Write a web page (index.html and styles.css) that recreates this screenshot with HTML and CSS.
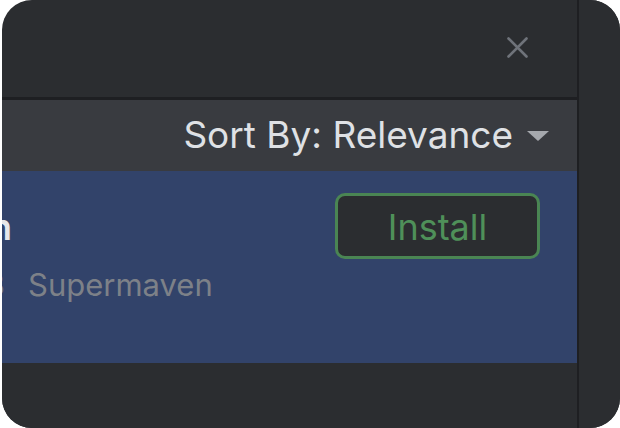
FILE: index.html
```html
<!DOCTYPE html>
<html lang="en">
<head>
<meta charset="utf-8">
<title>Plugins</title>
<link rel="stylesheet" href="styles.css">
</head>
<body>
<div class="window">
  <div class="main">
    <div class="header">
      <button class="close" aria-label="Close">
        <svg width="21" height="21" viewBox="0 0 21 21"><path d="M1.5 1.5 L19.5 19.5 M19.5 1.5 L1.5 19.5" stroke="#6f737a" stroke-width="2.6" stroke-linecap="round" fill="none"/></svg>
      </button>
    </div>
    <div class="sortbar">
      <span class="sort-label">Sort By: Relevance</span>
      <svg class="caret" width="22" height="10" viewBox="0 0 22 10"><path d="M0 0 H22 L11 10 Z" fill="#a5a8ad"/></svg>
    </div>
    <div class="plugin-row selected">
      <div class="info">
        <div class="name">Supermaven</div>
        <div class="meta">
          <span class="stats"><span>↓ 96.4K</span><span>★ 4.3</span></span>
          <span class="vendor">Supermaven</span>
        </div>
      </div>
      <button class="install">Install</button>
    </div>
    <div class="rest"></div>
  </div>
  <div class="vdivider"></div>
  <div class="side"></div>
</div>
</body>
</html>
```
FILE: styles.css
```css
html, body {
  margin: 0;
  padding: 0;
  background: #ffffff;
}

body {
  font-family: "Inter", "Noto Sans", sans-serif;
}

.window {
  display: flex;
  margin-left: 2px;
  width: 618px;
  height: 428px;
  border-radius: 30px;
  overflow: hidden;
  background: #2b2d30;
}

.main {
  flex: 0 0 575px;
  display: flex;
  flex-direction: column;
  overflow: hidden;
}

.vdivider {
  flex: 0 0 2px;
  background: #1e1f22;
}

.side {
  flex: 1;
  background: #2b2d30;
}

.header {
  height: 95px;
  border-bottom: 3px solid #1e1f22;
  display: flex;
  align-items: center;
  justify-content: flex-end;
  padding-right: 49px;
  padding-bottom: 2px;
  box-sizing: content-box;
  flex: 0 0 auto;
}

.close {
  width: 21px;
  height: 21px;
  padding: 0;
  border: 0;
  background: none;
  display: block;
}

.close svg {
  display: block;
}

.sortbar {
  flex: 0 0 71px;
  background: #393b40;
  display: flex;
  align-items: center;
  justify-content: flex-end;
  gap: 14px;
  padding-right: 28px;
  padding-bottom: 2px;
  box-sizing: border-box;
}

.sort-label {
  font-size: 37px;
  line-height: 1;
  color: #dfe1e5;
  white-space: nowrap;
}

.caret {
  display: block;
  margin-top: 3px;
}

.plugin-row {
  flex: 0 0 192px;
  display: flex;
  align-items: flex-start;
  justify-content: space-between;
  padding: 22px 37px 0 0;
  box-sizing: border-box;
}

.plugin-row.selected {
  background: #32436a;
}

.info {
  margin-left: -210px;
  margin-top: 16px;
  display: flex;
  flex-direction: column;
  gap: 24px;
  white-space: nowrap;
}

.name {
  font-size: 36px;
  font-weight: 600;
  line-height: 1;
  color: #e6e7ea;
}

.meta {
  display: flex;
  gap: 23px;
  font-size: 31px;
  line-height: 1;
  color: #7d8188;
}

.stats {
  width: 213px;
  display: flex;
  justify-content: flex-end;
  gap: 23px;
}

.install {
  width: 205px;
  height: 66px;
  border: 3px solid #4a8553;
  border-radius: 10px;
  background: #2b2d30;
  color: #4f9059;
  font-family: "Inter", "Noto Sans", sans-serif;
  font-size: 36px;
  line-height: 1;
  padding: 2px 0 0 0;
  display: flex;
  align-items: center;
  justify-content: center;
  box-sizing: border-box;
}

.rest {
  flex: 1;
  background: #2b2d30;
}
```
